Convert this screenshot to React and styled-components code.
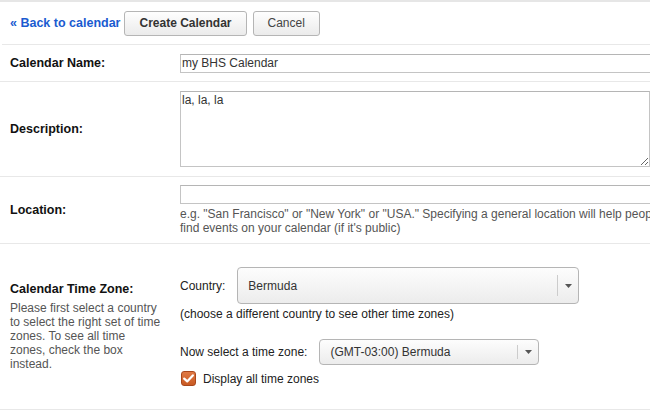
import React from "react";
import styled, { createGlobalStyle } from "styled-components";

const GlobalStyle = createGlobalStyle`
  html, body {
    margin: 0;
    padding: 0;
    overflow: hidden;
    background: #fff;
    font-family: Arial, "Liberation Sans", sans-serif;
    font-size: 12px;
    color: #222;
  }
`;

export default function App() {
  return (
    <Page>
      <GlobalStyle />
      <Toolbar>
        <BackLink href="#">« Back to calendar</BackLink>
        <Button primary>Create Calendar</Button>
        <Button>Cancel</Button>
      </Toolbar>
      <Row height={36}>
        <Label>Calendar Name:</Label>
        <Field>
          <TextInput defaultValue="my BHS Calendar" />
        </Field>
      </Row>
      <Row height={94}>
        <Label>Description:</Label>
        <Field>
          <TextArea defaultValue="la, la, la" />
        </Field>
      </Row>
      <Row height={66}>
        <Label>Location:</Label>
        <Field>
          <TextInput />
          <Hint>
            e.g. "San Francisco" or "New York" or "USA." Specifying a general
            location will help people find events on your calendar (if it's
            public)
          </Hint>
        </Field>
      </Row>
      <Row height={165}>
        <LabelBlock>
          <Label>Calendar Time Zone:</Label>
          <SideNote>
            Please first select a country
            <br />
            to select the right set of time
            <br />
            zones. To see all time
            <br />
            zones, check the box
            <br />
            instead.
          </SideNote>
        </LabelBlock>
        <Field>
          <InlineRow>
            <span>Country:</span>
            <Select width={342} tall>
              <span>Bermuda</span>
              <Arrow />
            </Select>
          </InlineRow>
          <Note>(choose a different country to see other time zones)</Note>
          <InlineRow top={18}>
            <span>Now select a time zone:</span>
            <Select width={220}>
              <span>(GMT-03:00) Bermuda</span>
              <Arrow />
            </Select>
          </InlineRow>
          <CheckRow>
            <CheckBox>
              <svg width="11" height="9" viewBox="0 0 11 9">
                <path
                  d="M1.2 4.6 L4.2 7.4 L9.8 1.4"
                  fill="none"
                  stroke="#fff"
                  strokeWidth="2.2"
                  strokeLinecap="round"
                  strokeLinejoin="round"
                />
              </svg>
            </CheckBox>
            <span>Display all time zones</span>
          </CheckRow>
        </Field>
      </Row>
    </Page>
  );
}

function Arrow() {
  return (
    <ArrowBox>
      <svg width="7" height="4" viewBox="0 0 7 4">
        <path d="M0 0 L7 0 L3.5 4 Z" fill="#555" />
      </svg>
    </ArrowBox>
  );
}

const Page = styled.div`
  width: 650px;
  border-top: 2px solid #e6e6e6;
`;

const Toolbar = styled.div`
  display: flex;
  align-items: center;
  height: 42px;
  padding-left: 8px;
  margin-left: 2px;
  border-bottom: 1px solid #e8e8e8;
  gap: 6px;
`;

const BackLink = styled.a`
  color: #1a5bd0;
  font-weight: bold;
  font-size: 12.5px;
  text-decoration: none;
  margin-right: -2px;
`;

const Button = styled.button`
  height: 25px;
  padding: 0 14px;
  border: 1px solid #b5b5b5;
  border-radius: 3px;
  background: linear-gradient(#fefefe, #ebebeb);
  font-family: Arial, "Liberation Sans", sans-serif;
  font-size: 12px;
  font-weight: ${(p) => (p.primary ? "bold" : "normal")};
  color: ${(p) => (p.primary ? "#333" : "#444")};
`;

const Row = styled.div`
  display: grid;
  grid-template-columns: 180px 1fr;
  align-items: center;
  height: ${(p) => p.height}px;
  border-bottom: 1px solid #e8e8e8;
`;

const Label = styled.div`
  padding-left: 10px;
  font-weight: bold;
  font-size: 12.5px;
  color: #111;
`;

const LabelBlock = styled.div`
  display: flex;
  flex-direction: column;
  gap: 5px;
`;

const SideNote = styled.div`
  margin-left: 10px;
  white-space: nowrap;
  font-size: 12px;
  line-height: 14px;
  color: #555;
`;

const Field = styled.div`
  display: flex;
  flex-direction: column;
  min-width: 0;
`;

const TextInput = styled.input`
  box-sizing: border-box;
  width: 490px;
  height: 19px;
  border: 1px solid #c4c4c4;
  border-top-color: #b5b5b5;
  padding: 0 1px;
  font-family: Arial, "Liberation Sans", sans-serif;
  font-size: 12px;
  color: #333;
  outline: none;
`;

const TextArea = styled.textarea`
  box-sizing: border-box;
  width: 470px;
  height: 76px;
  margin: 0;
  border: 1px solid #c4c4c4;
  border-top-color: #b5b5b5;
  padding: 1px 1px;
  font-family: Arial, "Liberation Sans", sans-serif;
  font-size: 12px;
  color: #333;
  outline: none;
  display: block;
`;

const Hint = styled.div`
  margin-top: 3px;
  width: 500px;
  font-size: 12px;
  line-height: 14px;
  color: #555;
`;

const InlineRow = styled.div`
  display: flex;
  align-items: center;
  gap: 12px;
  margin-top: ${(p) => p.top ?? 0}px;
  font-size: 12px;
  color: #222;
`;

const Select = styled.div`
  box-sizing: border-box;
  display: flex;
  align-items: center;
  justify-content: space-between;
  width: ${(p) => p.width}px;
  height: ${(p) => (p.tall ? 37 : 26)}px;
  padding-left: 10px;
  border: 1px solid #b5b5b5;
  border-radius: 4px;
  background: linear-gradient(#fdfdfd, #ececec);
  font-size: 12px;
  color: #333;
`;

const ArrowBox = styled.div`
  display: flex;
  align-items: center;
  justify-content: center;
  width: 20px;
  height: 60%;
  border-left: 1px solid #ccc;
`;

const Note = styled.div`
  margin-top: 3px;
  font-size: 12px;
  color: #222;
`;

const CheckRow = styled.div`
  display: flex;
  align-items: center;
  gap: 7px;
  margin-top: 6px;
  margin-left: 1px;
  font-size: 12px;
  color: #222;
`;

const CheckBox = styled.div`
  box-sizing: border-box;
  display: flex;
  align-items: center;
  justify-content: center;
  width: 15px;
  height: 15px;
  border-radius: 3px;
  border: 1px solid #a9471c;
  background: linear-gradient(#e07a45, #c95a23);
`;
